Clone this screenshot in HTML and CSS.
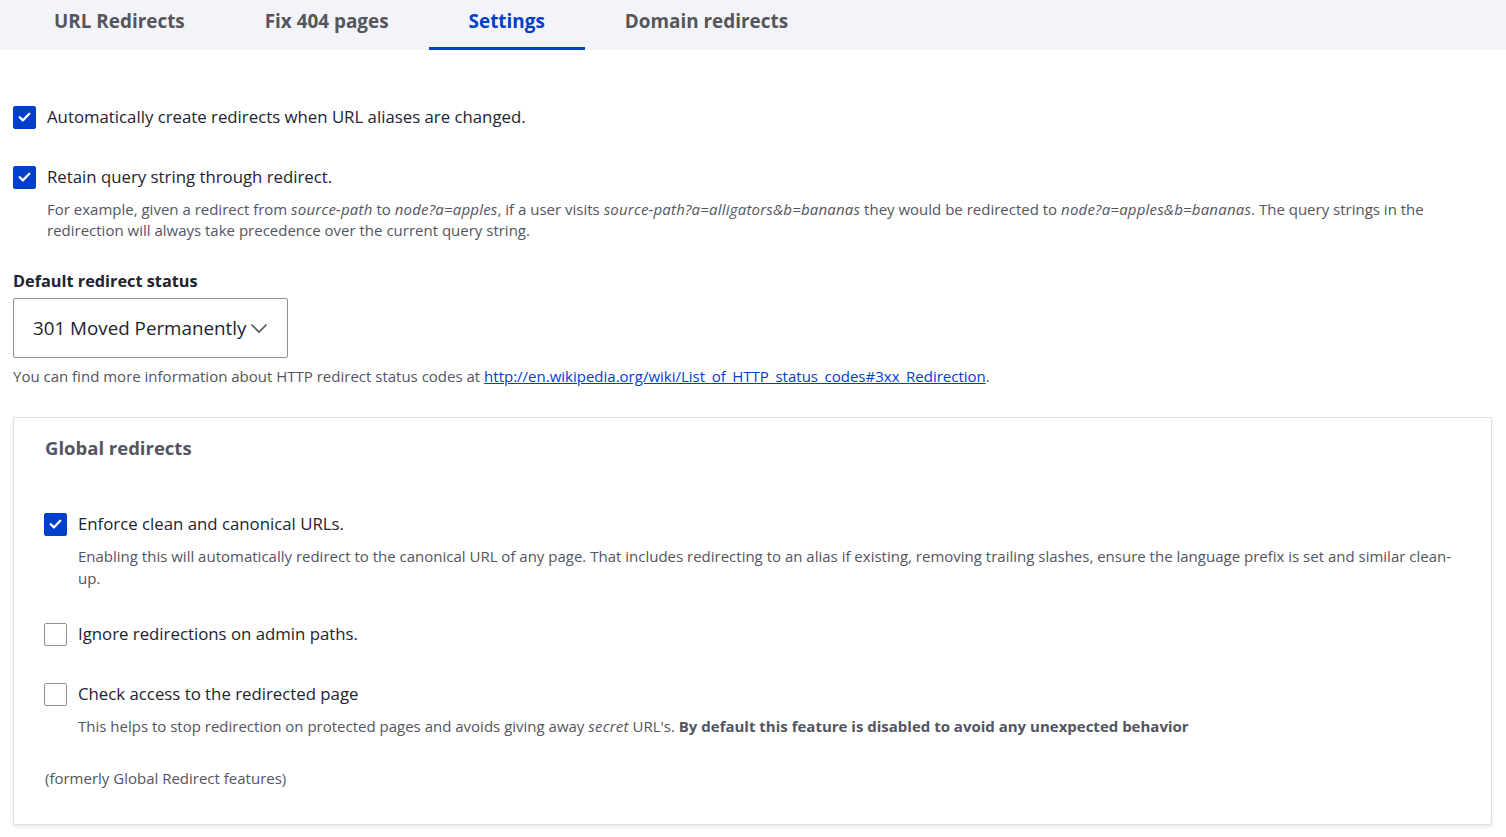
FILE: index.html
```html
<!DOCTYPE html>
<html lang="en">
<head>
<meta charset="utf-8">
<title>Redirect settings</title>
<link rel="stylesheet" href="styles.css">
</head>
<body>
<nav class="tabs">
  <a class="tab">URL Redirects</a>
  <a class="tab">Fix 404 pages</a>
  <a class="tab active">Settings</a>
  <a class="tab">Domain redirects</a>
</nav>
<main class="content">
  <div class="item item-first">
    <div class="cb-row">
      <span class="cb checked"><svg viewBox="0 0 22 22" width="22" height="22"><path d="M6 11.2l3.3 3.3L16 7.6" fill="none" stroke="#fff" stroke-width="2.4" stroke-linecap="round" stroke-linejoin="round"/></svg></span>
      <span class="cb-label">Automatically create redirects when URL aliases are changed.</span>
    </div>
  </div>
  <div class="item">
    <div class="cb-row">
      <span class="cb checked"><svg viewBox="0 0 22 22" width="22" height="22"><path d="M6 11.2l3.3 3.3L16 7.6" fill="none" stroke="#fff" stroke-width="2.4" stroke-linecap="round" stroke-linejoin="round"/></svg></span>
      <span class="cb-label">Retain query string through redirect.</span>
    </div>
    <p class="desc">For example, given a redirect from <em>source-path</em> to <em>node?a=apples</em>, if a user visits <em>source-path?a=alligators&amp;b=bananas</em> they would be redirected to <em>node?a=apples&amp;b=bananas</em>. The query strings in the redirection will always take precedence over the current query string.</p>
  </div>
  <div class="select-item">
    <label class="field-label">Default redirect status</label>
    <div class="select">
      <span>301 Moved Permanently</span>
      <svg class="chev" viewBox="0 0 18 12" width="18" height="12"><path d="M1.5 2.5l7.5 7.5 7.5-7.5" fill="none" stroke="#545560" stroke-width="1.6"/></svg>
    </div>
    <p class="help">You can find more information about HTTP redirect status codes at <a class="link">http://en.wikipedia.org/wiki/List_of_HTTP_status_codes#3xx_Redirection</a>.</p>
  </div>
  <section class="fieldset">
    <h2 class="legend">Global redirects</h2>
    <div class="item fs-first">
      <div class="cb-row">
        <span class="cb checked"><svg viewBox="0 0 22 22" width="22" height="22"><path d="M6 11.2l3.3 3.3L16 7.6" fill="none" stroke="#fff" stroke-width="2.4" stroke-linecap="round" stroke-linejoin="round"/></svg></span>
        <span class="cb-label">Enforce clean and canonical URLs.</span>
      </div>
      <p class="desc desc-fs">Enabling this will automatically redirect to the canonical URL of any page. That includes redirecting to an alias if existing, removing trailing slashes, ensure the language prefix is set and similar clean-up.</p>
    </div>
    <div class="item item-ignore">
      <div class="cb-row">
        <span class="cb"></span>
        <span class="cb-label">Ignore redirections on admin paths.</span>
      </div>
    </div>
    <div class="item item-check">
      <div class="cb-row">
        <span class="cb"></span>
        <span class="cb-label">Check access to the redirected page</span>
      </div>
      <p class="desc desc-fs">This helps to stop redirection on protected pages and avoids giving away <em>secret</em> URL's. <strong>By default this feature is disabled to avoid any unexpected behavior</strong></p>
    </div>
    <p class="formerly">(formerly Global Redirect features)</p>
  </section>
</main>
</body>
</html>
```

FILE: styles.css
```css
* { box-sizing: border-box; }
html, body { margin: 0; padding: 0; background: #fff; }
body {
  font-family: "Open Sans", "Noto Sans", sans-serif;
  color: #222330;
  width: 1506px;
  height: 837px;
  overflow: hidden;
}
p { margin: 0; }

.tabs {
  display: flex;
  background: #f3f4f9;
  height: 50px;
  padding-left: 14px;
}
.tab {
  display: block;
  height: 50px;
  padding: 9px 40px 0;
  font-size: 18.9px;
  font-weight: 700;
  line-height: 24px;
  color: #55565b;
}
.tab.active {
  color: #003ecc;
  border-bottom: 3px solid #003ecc;
}

.content {
  padding: 0 14px 0 13px;
}
.item-first { margin-top: 55px; }
.item + .item { margin-top: 36px; }
.cb-row {
  display: flex;
  align-items: center;
  height: 24px;
}
.cb {
  width: 23px;
  height: 23px;
  flex: none;
  border: 1px solid #8e929c;
  border-radius: 2px;
  background: #fff;
  margin-right: 11px;
  display: flex;
  align-items: center;
  justify-content: center;
}
.cb.checked {
  background: #003ecc;
  border-color: #003ecc;
}
.cb svg { display: block; }
.cb-label {
  font-size: 16.8px;
  line-height: 24px;
  color: #222330;
}
.desc {
  margin: 10px 0 0 34px;
  font-size: 15px;
  line-height: 21px;
  color: #545560;
}
.desc em { letter-spacing: 0.2px; }

.select-item { margin-top: 28px; }
.field-label {
  display: block;
  font-size: 16.3px;
  font-weight: 700;
  line-height: 24px;
  color: #222330;
}
.select {
  margin-top: 5px;
  width: 275px;
  height: 60px;
  border: 1px solid #8e929c;
  border-radius: 2px;
  display: flex;
  align-items: center;
  padding-left: 19px;
  font-size: 18.8px;
  color: #222330;
}
.select span { line-height: 24px; }
.chev { margin-left: 4px; margin-top: -1px; }
.help {
  margin-top: 8px;
  font-size: 15px;
  line-height: 21px;
  color: #545560;
}
.link {
  color: #003ecc;
  text-decoration: underline;
}

.fieldset {
  margin-top: 30px;
  width: 1479px;
  height: 408px;
  border: 1px solid #dedfe4;
  border-radius: 2px;
  box-shadow: 0 2px 4px rgba(0, 0, 0, 0.1);
  padding: 17px 30px 0 30px;
}
.legend {
  margin: 0 0 0 1px;
  font-size: 18.5px;
  font-weight: 700;
  line-height: 26px;
  color: #545560;
}
.fs-first { margin-top: 51px; }
.desc-fs { line-height: 22px; margin-top: 9px; }
.item + .item-ignore { margin-top: 33px; }
.item + .item-check { margin-top: 36px; }
.formerly {
  margin: 30px 0 0 1px;
  font-size: 15px;
  line-height: 22px;
  color: #545560;
}
```
